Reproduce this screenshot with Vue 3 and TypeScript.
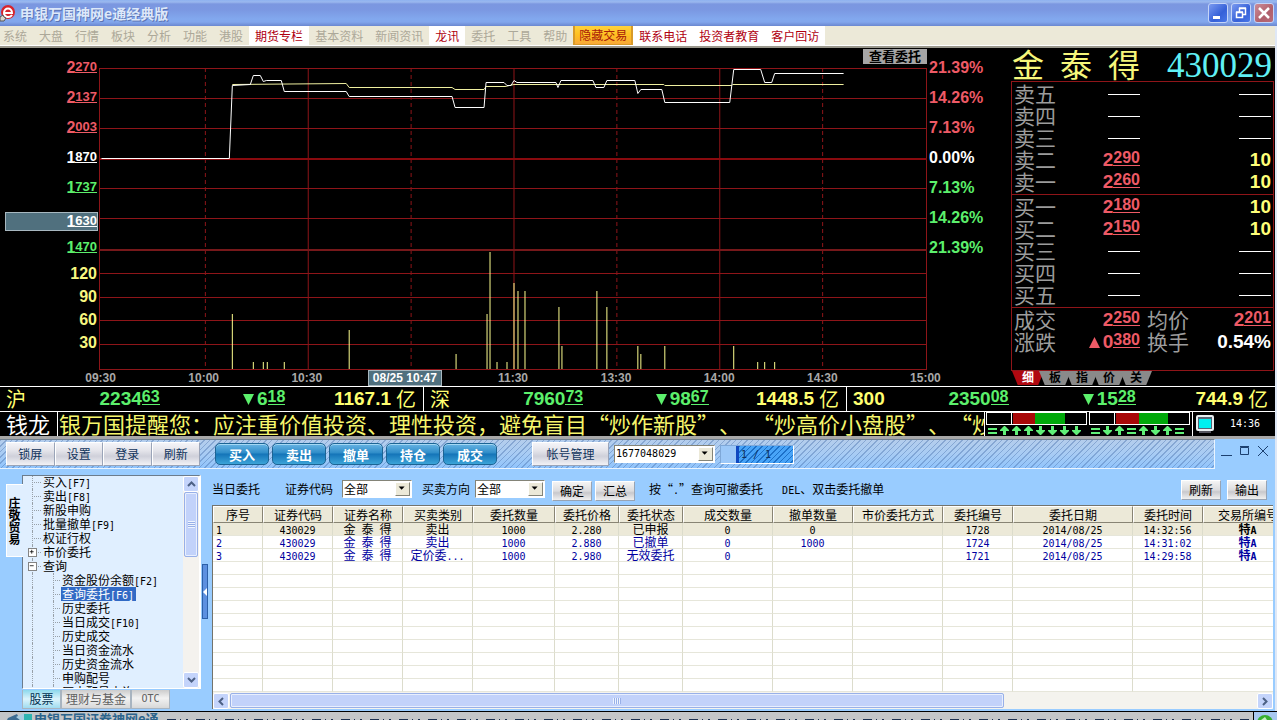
<script setup lang="ts">
import { ref } from 'vue'

interface MenuEntry { label: string; kind?: 'white' | 'gold' }
interface Split { big: string; small: string }
interface Quote { label: string; price?: Split; volume?: string }
interface TreeNode { label: string; key?: string; level: number; sign?: '+' | '-'; active?: boolean }

const menu: MenuEntry[] = [
  { label: '系统' }, { label: '大盘' }, { label: '行情' }, { label: '板块' }, { label: '分析' },
  { label: '功能' }, { label: '港股' }, { label: '期货专栏', kind: 'white' }, { label: '基本资料' },
  { label: '新闻资讯' }, { label: '龙讯', kind: 'white' }, { label: '委托' }, { label: '工具' },
  { label: '帮助' }, { label: '隐藏交易', kind: 'gold' }, { label: '联系电话', kind: 'white' },
  { label: '投资者教育', kind: 'white' }, { label: '客户回访', kind: 'white' },
]

const priceAxis = [
  { big: '2', small: '270', tone: 'red' }, { big: '2', small: '137', tone: 'red' },
  { big: '2', small: '003', tone: 'red' }, { big: '1', small: '870', tone: 'white' },
  { big: '1', small: '737', tone: 'green' }, { big: '1', small: '630', tone: 'cursor' },
  { big: '1', small: '470', tone: 'green' },
]
const volumeAxis = ['120', '90', '60', '30']
const percentAxis = [
  { text: '21.39%', tone: 'red' }, { text: '14.26%', tone: 'red' }, { text: '7.13%', tone: 'red' },
  { text: '0.00%', tone: 'white' }, { text: '7.13%', tone: 'green' }, { text: '14.26%', tone: 'green' },
  { text: '21.39%', tone: 'green' },
]
const times = ['09:30', '10:00', '10:30', '08/25 10:47', '11:30', '13:30', '14:00', '14:30', '15:00']

const gridRows = [68, 98, 128, 188, 218, 273, 297, 320, 344, 369]
const solidCols = [308, 514, 720]
const dashedCols = [205, 411, 617, 823]
const volumes: [number, number][] = [
  [232, 314], [253, 362], [263, 362], [267, 362], [284, 362], [349, 330], [456, 354], [487, 314],
  [490, 252], [497, 362], [507, 362], [514, 283], [518, 291], [525, 291], [559, 307], [562, 346],
  [597, 291], [607, 307], [638, 346], [641, 354], [665, 346], [734, 346], [758, 362], [765, 362], [775, 362],
]
const priceLine =
  '101,158 229,158 232,85 250,84 253,75 260,75 263,81 266,80 281,80 284,91 346,91 349,96 452,96 455,107 484,107 486,82 504,82 507,85 511,85 514,80 517,82 556,82 558,87 561,80 593,80 596,87 604,87 607,80 635,80 638,93 641,89 662,89 665,102 730,102 734,69 761,69 765,82 772,82 775,73 844,73'
const averageLine =
  '232,84 346,83 349,87 452,87 455,89 484,89 486,86 505,86 514,84 664,84 665,85 732,85 733,84 844,84'

const asks: Quote[] = [
  { label: '卖五' }, { label: '卖四' }, { label: '卖三' },
  { label: '卖二', price: { big: '2', small: '290' }, volume: '10' },
  { label: '卖一', price: { big: '2', small: '260' }, volume: '10' },
]
const bids: Quote[] = [
  { label: '买一', price: { big: '2', small: '180' }, volume: '10' },
  { label: '买二', price: { big: '2', small: '150' }, volume: '10' },
  { label: '买三' }, { label: '买四' }, { label: '买五' },
]
const quoteTabs = ['细', '板', '指', '价', '关']

const indices = [
  { name: '沪', value: { big: '2234', small: '63' }, change: { big: '6', small: '18' }, amount: '1167.1' },
  { name: '深', value: { big: '7960', small: '73' }, change: { big: '98', small: '67' }, amount: '1448.5' },
  { name: '300', value: { big: '2350', small: '08' }, change: { big: '15', small: '28' }, amount: '744.9' },
]
const meterMarks = [
  ['=', 'u', 'u', 'u', 'd', 'd', 'd', 'd'],
  ['=', 'd', 'u', '=', 'u', 'd', 'u', '='],
]
const markPath: Record<string, string> = {
  '=': 'M1 3h9v2h-9zM1 7h9v2h-9z',
  u: 'M5 1h1l4 4v1H7v4H4V6H1V5z',
  d: 'M4 1h3v4h3v1l-4 4H5L1 6V5h3z',
}

const utilityButtons = ['锁屏', '设置', '登录', '刷新']
const tradeButtons = ['买入', '卖出', '撤单', '持仓', '成交']

const tree: TreeNode[] = [
  { label: '买入', key: '[F7]', level: 1 }, { label: '卖出', key: '[F8]', level: 1 },
  { label: '新股申购', level: 1 }, { label: '批量撤单', key: '[F9]', level: 1 },
  { label: '权证行权', level: 1 }, { label: '市价委托', level: 1, sign: '+' },
  { label: '查询', level: 1, sign: '-' }, { label: '资金股份余额', key: '[F2]', level: 2 },
  { label: '查询委托', key: '[F6]', level: 2, active: true }, { label: '历史委托', level: 2 },
  { label: '当日成交', key: '[F10]', level: 2 }, { label: '历史成交', level: 2 },
  { label: '当日资金流水', level: 2 }, { label: '历史资金流水', level: 2 },
  { label: '申购配号', level: 2 }, { label: '历史配号查询', level: 2 },
]
const treeTabs = ['股票', '理财与基金', 'OTC']

const columns = [
  { title: '序号', cls: 'w50' }, { title: '证券代码', cls: 'w70' }, { title: '证券名称', cls: 'w70' },
  { title: '买卖类别', cls: 'w70' }, { title: '委托数量', cls: 'w82' }, { title: '委托价格', cls: 'w64' },
  { title: '委托状态', cls: 'w64' }, { title: '成交数量', cls: 'w90' }, { title: '撤单数量', cls: 'w80' },
  { title: '市价委托方式', cls: 'w90' }, { title: '委托编号', cls: 'w70' }, { title: '委托日期', cls: 'w120' },
  { title: '委托时间', cls: 'w70' }, { title: '交易所编号', cls: 'w90' },
]
const orders = [
  ['1', '430029', '金\u2002泰\u2002得', '卖出', '1000', '2.280', '已申报', '0', '0', '', '1728', '2014/08/25', '14:32:56', '特A'],
  ['2', '430029', '金\u2002泰\u2002得', '卖出', '1000', '2.880', '已撤单', '0', '1000', '', '1724', '2014/08/25', '14:31:02', '特A'],
  ['3', '430029', '金\u2002泰\u2002得', '定价委...', '1000', '2.980', '无效委托', '0', '', '', '1721', '2014/08/25', '14:29:58', '特A'],
]
// Splits a cell into runs so that half-width characters get the fixed-width face.
const runs = (s: string) => s.split(/([\x21-\x7e]+)/).filter(Boolean)
const isLatin = (s: string) => /^[\x21-\x7e]+$/.test(s)

const account = ref('1677048029')
const code = ref('全部')
const side = ref('全部')
</script>

<template>
  <div class="window">
    <header class="titlebar">
      <svg class="logo" width="18" height="18" viewBox="0 0 18 18" aria-hidden="true">
        <circle cx="8" cy="8" r="7" fill="#d8242c" />
        <path d="M4 9h8c0-6-8-6-8 0c0 5 6 5 8 2" fill="none" stroke="#fff" stroke-width="2" />
        <path d="M0 13l3-2 1 2 2 1-2 3H0z" fill="#d9d4cc" stroke="#555" />
      </svg>
      <h1>申银万国神网e通经典版</h1>
      <div class="win-buttons">
        <button type="button" aria-label="最小化">
          <svg width="18" height="18" viewBox="0 0 18 18"><path d="M4 12h7v3H4z" fill="#fff" /></svg>
        </button>
        <button type="button" aria-label="还原">
          <svg width="18" height="18" viewBox="0 0 18 18" fill="none" stroke="#fff">
            <path d="M4.500 8.500h6v5h-6zM4 8h7M7.500 8V4.500h6v6H11M7 4h7" stroke-width="1.500" />
          </svg>
        </button>
        <button type="button" class="close" aria-label="关闭">
          <svg width="18" height="18" viewBox="0 0 18 18"><path d="M4 4l10 10M14 4L4 14" stroke="#fff" stroke-width="2.500" /></svg>
        </button>
      </div>
    </header>

    <nav class="menubar">
      <button v-for="m in menu" :key="m.label" type="button" :class="m.kind">{{ m.label }}</button>
    </nav>

    <main class="market">
      <section class="chart">
        <div class="axis left">
          <div v-for="p in priceAxis" :key="p.small" class="tick" :class="p.tone">
            <span>{{ p.big }}<u>{{ p.small }}</u></span>
          </div>
          <div v-for="v in volumeAxis" :key="v" class="tick vol">{{ v }}</div>
        </div>

        <div class="plot">
          <button type="button" class="view-orders">查看委托</button>
          <svg viewBox="99 48 829 322" preserveAspectRatio="none" aria-label="分时走势">
            <g shape-rendering="crispEdges" fill="none">
              <g stroke="#8f1519">
                <path v-for="y in gridRows" :key="y" :d="`M99 ${y}.5H928`" />
                <path d="M99.500 68V370M927.500 68V370" />
                <path v-for="x in solidCols" :key="x" :d="`M${x}.5 68V370`" />
                <path v-for="x in dashedCols" :key="x" :d="`M${x}.5 68V370`" stroke-dasharray="4 3" />
              </g>
              <path d="M99 159H928" stroke="#8a0a0e" stroke-width="2" />
              <path d="M99 250H928" stroke="#76181a" stroke-width="2" />
              <path v-for="v in volumes" :key="v[0]" :d="`M${v[0]}.5 ${v[1]}V369`" stroke="#ffff90" />
              <polyline :points="averageLine" stroke="#f0f0a0" transform="translate(.5 .5)" />
              <polyline :points="priceLine" stroke="#fff" transform="translate(.5 .5)" />
            </g>
          </svg>
          <div class="times">
            <span v-for="t in times" :key="t" :class="{ cursor: t.length > 5 }">{{ t }}</span>
          </div>
        </div>

        <div class="axis right">
          <div v-for="(p, i) in percentAxis" :key="i" class="tick" :class="p.tone">{{ p.text }}</div>
        </div>
      </section>

      <aside class="quote">
        <div class="quote-head">
          <h2><span>金</span><span>泰</span><span>得</span></h2>
          <span class="stock-code">430029</span>
        </div>
        <div class="quote-box">
          <div v-for="(group, g) in [asks, bids]" :key="g" class="levels">
            <div v-for="q in group" :key="q.label" class="level">
              <span class="lbl">{{ q.label }}</span>
              <span v-if="q.price" class="num red">{{ q.price.big }}<u>{{ q.price.small }}</u></span>
              <span v-else class="none"></span>
              <span v-if="q.volume" class="num yellow">{{ q.volume }}</span>
              <span v-else class="none"></span>
            </div>
          </div>
          <div class="levels summary">
            <div class="level four">
              <span class="lbl">成交</span><span class="num red">2<u>250</u></span>
              <span class="lbl">均价</span><span class="num red">2<u>201</u></span>
            </div>
            <div class="level four">
              <span class="lbl">涨跌</span>
              <span class="num red">
                <svg width="11" height="11" viewBox="0 0 11 11"><path d="M5.500 0L11 11H0z" fill="currentColor" /></svg>
                0<u>380</u>
              </span>
              <span class="lbl">换手</span><span class="num white">0.54%</span>
            </div>
          </div>
        </div>
        <div class="quote-tabs">
          <button v-for="(t, i) in quoteTabs" :key="t" type="button" :class="{ on: i === 0 }">{{ t }}</button>
        </div>
      </aside>
    </main>

    <section class="indices">
      <div v-for="x in indices" :key="x.name" class="index">
        <div class="first">
          <span :class="x.name.length > 1 ? 'num' : 'cn'">{{ x.name }}</span>
          <span class="num green">{{ x.value.big }}<u>{{ x.value.small }}</u></span>
        </div>
        <span class="num green">
          <svg width="11" height="11" viewBox="0 0 11 11"><path d="M0 0h11L5.500 11z" fill="currentColor" /></svg>{{ x.change.big }}<u>{{ x.change.small }}</u>
        </span>
        <span class="amount"><span class="num">{{ x.amount }}</span><span class="cn">亿</span></span>
      </div>
    </section>

    <section class="ticker">
      <span class="brand">钱龙</span>
      <p class="news" lang="zh-CN"><span>银万国提醒您：应注重价值投资、理性投资，避免盲目“炒作新股”、</span><span>“炒高价小盘股”、“炒</span></p>
      <div class="meters">
        <svg v-for="(row, r) in meterMarks" :key="r" width="103" height="24" viewBox="0 0 103 24" aria-hidden="true">
          <path v-if="r === 0" d="M28 0h22v13H28z" fill="#a80808" />
          <path v-if="r === 0" d="M50 0h30v13H50z" fill="#00a80a" />
          <path v-if="r === 1" d="M28 0h23v13H28z" fill="#a80808" />
          <path v-if="r === 1" d="M51 0h29v13H51z" fill="#00a80a" />
          <path d="M1.500 .5h100v12H1.500zM26.500 0v13" fill="none" stroke="#fff" shape-rendering="crispEdges" />
          <path v-for="(m, i) in row" :key="i" :d="markPath[m]" :transform="`translate(${2 + i * 12} 13)`" fill="#60f078" />
        </svg>
      </div>
      <div class="status">
        <svg width="18" height="18" viewBox="0 0 18 18" aria-hidden="true">
          <rect x="1" y="1" width="16" height="14" rx="1" fill="#567" stroke="#e8eef0" stroke-width="2" />
          <rect x="3" y="4" width="12" height="9" fill="#00f0f0" />
          <path d="M3 17h12" stroke="#aab" />
        </svg>
        <time class="mono">14:36</time>
      </div>
    </section>

    <section class="trade">
      <div class="trade-top">
        <div class="toolbar">
          <div class="utility">
            <button v-for="b in utilityButtons" :key="b" type="button">{{ b }}</button>
          </div>
          <div class="pills">
            <button v-for="b in tradeButtons" :key="b" type="button">{{ b }}</button>
          </div>
          <button type="button" class="account-btn">帐号管理</button>
          <span class="select account">
            <select v-model="account" class="mono" aria-label="帐号"><option>1677048029</option></select>
            <svg width="15" height="14" viewBox="0 0 15 14"><path d="M3 4h7L6.500 8z" /></svg>
          </span>
          <div class="pager mono"><span>1 / 1</span></div>
        </div>
        <div class="mini-buttons">
          <button type="button" aria-label="最小化"><svg width="12" height="12" viewBox="0 0 12 12"><path d="M0 10.500h11" /></svg></button>
          <button type="button" aria-label="最大化"><svg width="12" height="12" viewBox="0 0 12 12"><path d="M1.500 2.500h8v7h-8zM1 1.500h9" /></svg></button>
          <button type="button" aria-label="关闭"><svg width="12" height="12" viewBox="0 0 12 12"><path d="M1 1l10 10M11 1L1 11" /></svg></button>
        </div>
      </div>

      <div class="trade-body">
        <aside class="side">
          <button type="button" class="side-tab">庄敬贸易</button>
          <div class="side-main">
            <div class="tree-box">
              <ul class="tree">
                <li v-for="n in tree" :key="n.label" :class="[`l${n.level}`, { active: n.active }]">
                  <span v-if="n.sign" class="sign"><svg width="9" height="9" viewBox="0 0 9 9"><path :d="n.sign === '+' ? 'M1 3.500h5M3.500 1v5' : 'M1 3.500h5'" /></svg></span>
                  <button type="button">{{ n.label }}<span v-if="n.key" class="mono">{{ n.key }}</span></button>
                </li>
              </ul>
              <div class="vscroll" aria-hidden="true">
                <i class="arrow"><svg width="9" height="6" viewBox="0 0 9 6"><path d="M1 5l3.500-3.500L8 5" /></svg></i>
                <i class="thumb"><b></b></i>
                <i class="arrow end"><svg width="9" height="6" viewBox="0 0 9 6"><path d="M1 1l3.500 3.500L8 1" /></svg></i>
              </div>
            </div>
            <div class="side-tabs">
              <button v-for="(t, i) in treeTabs" :key="t" type="button" :class="{ on: i === 0, mono: i === 2 }">{{ t }}</button>
            </div>
          </div>
          <button type="button" class="splitter" aria-label="收起"><svg width="4" height="8" viewBox="0 0 4 8"><path d="M4 0v8L0 4z" fill="#fff" /></svg></button>
        </aside>

        <div class="orders">
          <form class="filters" @submit.prevent>
            <span class="caption">当日委托</span>
            <label for="code">证券代码</label>
            <span class="select"><select id="code" v-model="code"><option>全部</option></select>
              <svg width="15" height="14" viewBox="0 0 15 14"><path d="M3 4h7L6.500 8z" /></svg></span>
            <label for="side" class="second">买卖方向</label>
            <span class="select tight"><select id="side" v-model="side"><option>全部</option></select>
              <svg width="15" height="14" viewBox="0 0 15 14"><path d="M3 4h7L6.500 8z" /></svg></span>
            <button type="submit">确定</button>
            <button type="button" class="sum">汇总</button>
            <span class="hint" lang="zh-CN">按“<span class="mono">.</span>”查询可撤委托</span>
            <span class="hint2"><span class="mono">DEL</span>、双击委托撤单</span>
            <button type="button" class="refresh">刷新</button>
            <button type="button" class="export">输出</button>
          </form>

          <div class="grid">
            <div class="grid-view">
              <table>
                <thead>
                  <tr><th v-for="c in columns" :key="c.title" :class="c.cls" scope="col">{{ c.title }}</th></tr>
                </thead>
                <tbody>
                  <tr v-for="(row, r) in orders" :key="r" :class="{ current: r === 0 }">
                    <td v-for="(cell, c) in row" :key="c" :class="{ bold: c === 13 }">
                      <span v-for="(run, k) in runs(cell)" :key="k" :class="{ mono: isLatin(run) }">{{ run }}</span>
                    </td>
                  </tr>
                  <tr v-for="n in 10" :key="`e${n}`"><td v-for="c in columns" :key="c.title"></td></tr>
                </tbody>
              </table>
            </div>
            <div class="hscroll" aria-hidden="true">
              <i class="arrow"><svg width="6" height="9" viewBox="0 0 6 9"><path d="M5 1L1.500 4.500L5 8" /></svg></i>
              <i class="thumb"><b></b></i>
              <i class="arrow end"><svg width="6" height="9" viewBox="0 0 6 9"><path d="M1 1l3.500 3.500L1 8" /></svg></i>
            </div>
          </div>
        </div>
      </div>
    </section>

    <footer class="taskbar">
      <svg width="28" height="12" viewBox="0 0 28 12" aria-hidden="true">
        <path d="M2 6l9-4 4 8H0z" fill="#3d6c92" /><path d="M18 2h8v10h-8z" fill="#2fb4b0" /><path d="M10 5l8-4v10z" fill="#a9cde0" />
      </svg>
      <strong>申银万国证券神网e通</strong>
      <span class="strip"></span>
      <span class="tray"><svg width="22" height="14" viewBox="0 0 22 14"><circle cx="11" cy="11" r="8" fill="#38b030" /><path d="M7 8l4-3 2 3z" fill="#c8f0c0" /></svg></span>
    </footer>
  </div>
</template>

<style>
html, body { margin: 0; background: #000; }
</style>

<style scoped>
.window, .window * { box-sizing: border-box; }
.window {
  height: 100vh; min-height: 720px; display: flex; flex-direction: column; overflow: hidden;
  font-family: "Noto Sans CJK SC", sans-serif; font-size: 12px; line-height: 14px; color: #000; background: #dfe8f6;
}
button { font: inherit; color: inherit; border: 0; padding: 0; margin: 0; background: none; white-space: nowrap; }
h1, h2, p, ul { margin: 0; padding: 0; font-weight: normal; }
.mono { font-family: "DejaVu Sans Mono", monospace; font-size: 10px; line-height: 0; }
svg { display: block; }

.titlebar { flex: none; height: 26px; display: flex; align-items: center; padding: 0 3px 0 0;
  background: linear-gradient(#8eb2f0 0, #9ab8ee 2px, #7b97e0 4px, #7b98e2 10px, #82a8ee 19px, #82a6ec 22px, #6a87d0 26px); }
.logo { flex: none; margin-right: 2px; }
h1 { font-size: 14px; line-height: 24px; font-weight: 700; color: #dde8fa; text-shadow: 1px 1px 0 #5c74b4; flex: 1; }
.win-buttons { display: flex; gap: 3px; }
.win-buttons button { width: 20px; height: 20px; border: 1px solid #c4d4f8; border-radius: 3px; background: linear-gradient(135deg, #7a9af0, #3560d8 60%, #4a78e8); }
.win-buttons .close { background: linear-gradient(135deg, #cc8c98, #b0606c 60%, #b86a78); }

.menubar { flex: none; height: 22px; display: flex; align-items: stretch; background: #ece9d8; border-bottom: 2px solid #99978c; margin-right: 2px; box-shadow: inset 0 -1px #fff; padding-bottom: 1px; }
.menubar button { padding: 0 6px; color: #aca899; line-height: 18px; }
.menubar button:first-child { margin-left: -3px; }
.menubar button.white { background: #fff; color: #b00010; }
.menubar button.gold { color: #a82008; background: linear-gradient(#ffd23c, #ffc020 50%, #f8a838); border: 1px solid #d89a28; border-width: 0 2px 1px; padding: 0 4px; }

.market { flex: none; display: flex; background: #000; margin-right: 2px; height: 338px; font-family: "Liberation Sans", "Noto Sans CJK SC", sans-serif; }
.chart { flex: 1; display: flex; min-width: 0; font-weight: 700; font-size: 16px; }
.axis { padding-top: 4px; flex: none; }
.axis.left { width: 99px; text-align: right; padding-right: 2px; padding-left: 5px; }
.axis.right { width: 82px; padding-left: 2px; }
.tick { height: 30px; line-height: 31px; white-space: nowrap; }
.tick.vol { height: 23px; line-height: 24px; color: #f8f880; }
u { text-decoration: none; border-bottom: 1px solid currentColor; display: inline-block; }
.tick u { font-size: 13px; line-height: 11px; vertical-align: 2px; }
.red { color: #ee5a66; }
.white { color: #fff; }
.green { color: #5cf06c; }
.yellow { color: #ffff78; }
.tick.cursor { height: 19px; margin: 10px -1px 1px 0; background: #50707e; color: #fff; border: 1px solid #a8b8c0; line-height: 18px; }
.plot { flex: 1; min-width: 0; position: relative; }
.plot svg { width: 100%; height: 322px; }
.view-orders { position: absolute; top: 1px; right: 0; width: 64px; height: 15px; line-height: 14px; font-weight: 700; font-size: 13px; background: #a6a6a6; color: #000; }
.times { display: grid; grid-template-columns: repeat(9, minmax(0, 1fr)); margin: 0 -50px; height: 16px; font-size: 12px; line-height: 16px; color: #a8a8a8; position: relative; }
.times span { text-align: center; white-space: nowrap; }
.times .cursor { background: #50707e; border: 1px solid #a8b8c0; color: #fff; line-height: 14px; justify-self: center; padding: 0 4px; margin-right: 10px; height: 16px; }

.quote { flex: none; width: 266px; padding: 0 1px 0 2px; }
.quote-head { height: 33px; display: flex; justify-content: space-between; padding: 0 2px 0 1px; color: #f6f67a; }
h2 { display: flex; gap: 16px; font: 400 32px/31px "Noto Sans CJK SC", sans-serif; }
.stock-code { font: 35px/36px "Liberation Serif", serif; color: #60f0f4; }
.quote-box { border: 1px solid #8f1519; height: 290px; }
.levels { height: 113px; padding-top: 1px; border-bottom: 1px solid #8f1519; }
.levels.summary { border: 0; height: 62px; }
.level { height: 22px; display: grid; grid-template-columns: 44px 82px 1fr; align-items: center; padding: 0 2px; }
.level.four { grid-template-columns: 44px 82px 47px 1fr; }
.lbl { font: 400 21px/20px "Noto Sans CJK SC", sans-serif; color: #9c9c9c; align-self: start; }
.four .lbl:nth-child(3) { padding-left: 7px; white-space: nowrap; }
.num { font: 700 19px/22px "Liberation Sans", sans-serif; text-align: right; white-space: nowrap; display: flex; justify-content: flex-end; align-items: center; }
.num u { font-size: 16px; line-height: 14px; margin-top: -3px; }
.num svg { margin-right: 3px; }
.none { width: 32px; height: 1px; background: #fff; justify-self: end; }
.quote-tabs { display: flex; padding-left: 1px; }
.quote-tabs button { width: 32px; margin-right: -5px; height: 14px; line-height: 14px; font-weight: 700; font-size: 12px; background: #8a8a8a; color: #000; clip-path: polygon(0 0, 100% 0, 82% 100%, 18% 100%); }
.quote-tabs .on { background: #b00810; color: #fff; }

.indices { flex: none; height: 25px; margin-right: 2px; display: grid; grid-template-columns: 424fr 423fr 428fr; background: #000; border-top: 1px solid #fff; color: #ffff70; }
.index { display: grid; grid-template-columns: 160fr 126fr 138fr; border-right: 1px solid #fff; align-items: center; }
.index:last-child { border-right: 0; }
.first { display: flex; justify-content: space-between; padding-left: 6px; }
.cn { font-size: 20px; line-height: 22px; font-weight: 400; }
.amount { display: flex; justify-content: flex-end; gap: 5px; padding-right: 7px; }

.ticker { flex: none; height: 25px; margin-right: 2px; display: flex; background: #000; border-top: 1px solid #fff; color: #f6f66c; font-size: 22px; line-height: 22px; text-spacing-trim: space-all; }
.brand { flex: none; width: 58px; padding-left: 6px; border-right: 1px solid #fff; color: #fff; }
.news { flex: 1; min-width: 0; overflow: hidden; white-space: nowrap; padding-left: 1px; display: flex; gap: 11px; }
.news span { flex: none; }
.meters { flex: none; display: flex; width: 209px; border: 1px solid #fff; border-width: 0 1px; }
.status { flex: none; width: 82px; display: flex; align-items: center; padding-left: 3px; gap: 16px; color: #fff; }

.trade { flex: 1; min-height: 0; display: flex; flex-direction: column; background: #9cf; border-top: 3px solid #a8a8a8; margin-right: 2px; }
.trade-top { display: flex; flex: none; height: 30px; }
.toolbar { flex: 1; display: flex; align-items: center; min-width: 0; border-top: 1px solid #708090; border-bottom: 1px solid #eaf4ff; border-right: 1px solid #eaf4ff; padding-left: 6px;
  background: repeating-linear-gradient(135deg, rgba(70, 110, 170, .4) 0 1px, transparent 1px 4px), linear-gradient(#b4cdec, #a8ccf4 50%, #90c4fc); }
.utility { display: flex; width: 194px; }
.utility button { flex: 1; }
.utility button, .account-btn { height: 24px; border: 1px solid #fff; border-right-color: #9aa4b8; border-bottom-color: #9aa4b8; background: linear-gradient(#f4f4f8, #e4e4ea 35%, #cfd0da 60%, #f2f2f6); color: #10345c; line-height: 20px; }
.pills { display: flex; gap: 3px; margin-left: 15px; }
.pills button { width: 54px; height: 22px; border-radius: 5px; color: #fff; font-weight: 700; font-size: 13px; border: 1px solid #1c6494; background: linear-gradient(#68b4e4, #2e8cc8 45%, #1474b8 50%, #3ca4d8); box-shadow: inset 0 1px #a4d8f4; line-height: 17px; }
.account-btn { width: 77px; margin-left: 35px; flex: none; }
.select { position: relative; display: inline-flex; width: 70px; height: 18px; margin: 0 0 0 9px; flex: none; }
.select select { appearance: none; width: 100%; height: 18px; border: 1px solid #848478; border-right-color: #fff; border-bottom-color: #fff; border-radius: 0; background: #fff; padding: 0 16px 0 1px; font-family: "Noto Sans CJK SC", sans-serif; font-size: 12px; line-height: 16px; color: #000; }
.select select.mono { font-family: "DejaVu Sans Mono", monospace; font-size: 10px; }
.select svg { position: absolute; right: 2px; top: 2px; background: #ece9d8; border: 1px solid #fff; border-right-color: #848478; border-bottom-color: #848478; pointer-events: none; overflow: visible; }
.select.account { width: 101px; margin-left: 5px; }
.pager { margin-left: 5px; width: 74px; height: 19px; border: 1px solid #7fa8d8; border-right-color: #fff; border-bottom-color: #fff; background: #9cc8f8; padding-left: 15px; color: #103060; }
.pager span { display: block; height: 17px; line-height: 17px; padding-left: 2px; border-left: 3px solid #1048c0; background: repeating-linear-gradient(135deg, #1c70c8 0 1px, #48a4f8 1px 4px); }
.mini-buttons { flex: none; width: 60px; display: flex; gap: 6px; padding: 6px 0 0 6px; }
.mini-buttons button { height: 12px; }
.mini-buttons svg { fill: none; stroke: #1c4070; }

.trade-body { flex: 1; min-height: 0; display: flex; }
.side { flex: none; width: 211px; display: flex; padding: 6px 2px 2px 6px; }
.side-tab { width: 17px; height: 73px; margin: 9px -1px 0 0; padding: 0 2px; background: #e0efff; border: 1px solid #fff; border-right: 0; writing-mode: vertical-rl; font-weight: 700; line-height: 13px; position: relative; }
.side-main { width: 179px; display: flex; flex-direction: column; }
.tree-box { flex: 1; min-height: 0; display: flex; background: #e0efff; border: 1px solid #6c7c8c; border-right: 2px solid #fff; border-bottom-color: #fff; overflow: hidden; }
.tree { list-style: none; flex: 1; overflow: hidden; margin-top: -1px; }
.tree li { height: 14px; line-height: 14px; display: flex; align-items: center; position: relative; padding-left: 19px; }
.tree li::before { content: ""; position: absolute; left: 9px; top: 0; height: 14px; border-left: 1px dotted #98a0a8; }
.tree li::after { content: ""; position: absolute; left: 11px; top: 7px; width: 7px; border-top: 1px dotted #98a0a8; }
.tree li.l2 { padding-left: 38px; }
.tree li.l2::before { width: 20px; border-right: 1px dotted #98a0a8; }
.tree li.l2::after { left: 30px; }
.tree button { height: 14px; line-height: 11px; padding: 0 2px 2px 1px; white-space: nowrap; text-align: left; }
.tree .active button { background: #316ac5; color: #fff; }
.sign { position: absolute; left: 5px; top: 3px; z-index: 1; background: #fff; }
.sign svg { border: 1px solid #848484; fill: none; stroke: #000; overflow: visible; }
.vscroll { width: 16px; flex: none; background: #f4f2ee; display: flex; flex-direction: column; }
i { display: flex; align-items: center; justify-content: center; font-style: normal; }
.arrow { flex: none; width: 16px; height: 16px; background: #c4d4fb; border: 1px solid #fff; border-radius: 2px; }
.arrow svg { fill: none; stroke: #4d6185; stroke-width: 2; }
.thumb { background: #c2d2fa; border: 1px solid #98b0e8; border-radius: 2px; box-shadow: inset 0 0 0 1px #e8effe; }
.vscroll .thumb { height: 65px; margin: 0 1px; }
.vscroll .thumb b { width: 7px; height: 7px; background: repeating-linear-gradient(#eef4fe 0 1px, #98b0e8 1px 2px); }
.arrow.end { margin-top: auto; }
.side-tabs { display: flex; height: 20px; flex: none; }
.side-tabs button { height: 19px; width: 70px; border: 1px solid #a8b4c0; border-top: 0; background: linear-gradient(#ccc, #f2f2f2 45%, #d8d8d8); color: #606060; margin-top: 1px; }
.side-tabs .on { width: 39px; background: linear-gradient(#8cd8ec, #dcf4fc 50%, #a0dcf0); color: #003050; }
.side-tabs .mono { width: 39px; }
.splitter { width: 6px; height: 55px; margin: 89px 0 0 1px; background: #5c90e0; border: 1px solid #2c60a8; display: flex; align-items: center; }

.orders { flex: 1; min-width: 0; display: flex; flex-direction: column; }
.filters { flex: none; height: 36px; display: flex; align-items: center; padding: 4px 8px 0 1px; white-space: nowrap; }
.filters label { margin-left: 25px; }
.filters label.second { margin-left: 10px; }
.select.tight { margin-left: 5px; }
.filters button { width: 40px; height: 20px; margin: 4px 0 0 7px; border: 1px solid #fff; border-right-color: #98a4b4; border-bottom-color: #98a4b4; background: linear-gradient(#f4f4f4, #dcdcde 50%, #c8c8cc 60%, #f0f0f0); line-height: 16px; }
.filters button.sum { margin-left: 3px; }
.hint { margin-left: 14px; }
.hint2 { margin-left: 19px; }
.filters .refresh { margin: 2px 0 0 auto; }
.filters .export { margin: 2px 0 0 6px; }
.grid { flex: 1; min-height: 0; display: flex; flex-direction: column; background: #fff; border: 1px solid #74746c; border-width: 1px 0 0 1px; margin: 0 2px 2px 1px; overflow: hidden; }
.grid-view { flex: 1; min-height: 0; overflow: hidden; }
table { table-layout: fixed; border-collapse: separate; border-spacing: 0; width: 1080px; }
th { height: 17px; padding: 0; font-weight: 400; line-height: 14px; background: #ece9d8; border: 1px solid #fff; border-right-color: #888474; border-bottom-color: #888474; white-space: nowrap; overflow: hidden; }
td { height: 13px; padding: 0; line-height: 12px; text-align: center; color: #0000a0; border-right: 1px solid #dcdccc; border-bottom: 1px solid #e6e6da; white-space: nowrap; overflow: hidden; }
td:first-child { text-align: left; padding-left: 3px; }
.current td { background: #ece9d8; color: #000; }
.bold { font-weight: 700; }
.w50 { width: 50px; } .w64 { width: 64px; } .w70 { width: 70px; } .w80 { width: 80px; }
.w82 { width: 82px; } .w90 { width: 90px; } .w120 { width: 120px; }
.hscroll { flex: none; height: 17px; display: flex; background: #f4f3ee; padding: 1px 0; }
.hscroll .thumb { flex: 0 1 73%; height: 15px; margin-left: 1px; }
.hscroll .thumb b { width: 8px; height: 6px; background: repeating-linear-gradient(90deg, #eef4fe 0 1px, #98b0e8 1px 2px); }
.hscroll .arrow.end { margin: 0 0 0 auto; }

.taskbar { flex: none; height: 9px; display: flex; align-items: flex-start; overflow: hidden; background: #c4c6c8; border-top: 1px solid #000; padding-left: 6px; color: #2c648c; }
.taskbar strong { font-size: 13px; line-height: 14px; white-space: nowrap; }
.strip { flex: 1; height: 2px; margin: 7px 0 0 8px; background: repeating-linear-gradient(90deg, #1c3050 0 9px, transparent 9px 13px, #1c3050 13px 14px, transparent 14px 19px, #1c3050 19px 21px, transparent 21px 29px); }
.tray { width: 24px; border-left: 1px solid #000; background: #a8c8f0; }
</style>
